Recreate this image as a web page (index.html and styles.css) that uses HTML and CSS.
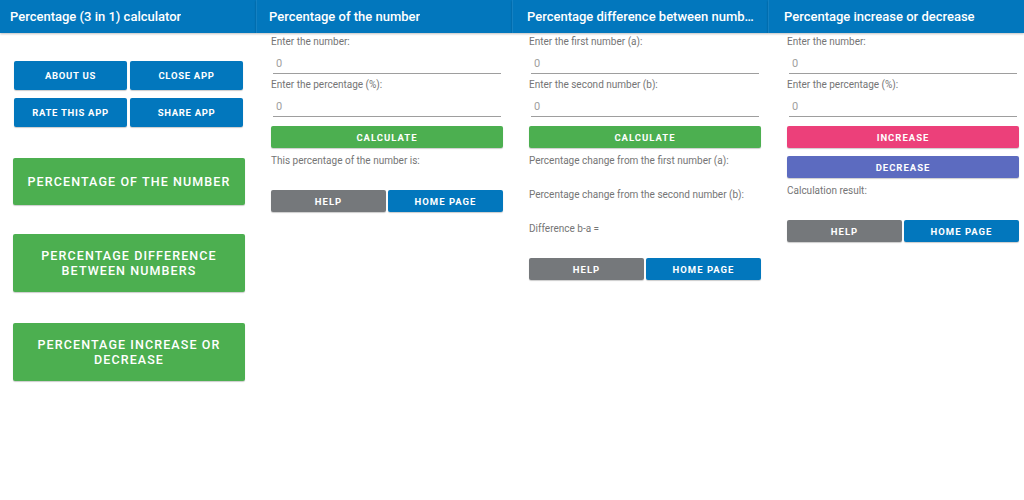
FILE: index.html
```html
<!DOCTYPE html>
<html lang="en">
<head>
    <meta charset="UTF-8">
    <meta name="viewport" content="width=device-width, initial-scale=1.0">
    <title>Percentage (3 in 1) calculator</title>
    <link rel="stylesheet" href="styles.css">
</head>
<body>
    <div class="screens">

        <!-- Home screen -->
        <section class="screen screen-home">
            <header class="appbar"><h1>Percentage (3 in 1) calculator</h1></header>
            <div class="content">
                <div class="menu-grid">
                    <button class="btn btn-blue btn-menu">About us</button>
                    <button class="btn btn-blue btn-menu">Close app</button>
                    <button class="btn btn-blue btn-menu">Rate this app</button>
                    <button class="btn btn-blue btn-menu">Share app</button>
                </div>
                <button class="btn btn-green btn-big btn-big-first">Percentage of the number</button>
                <button class="btn btn-green btn-big btn-big-tall">Percentage difference<br>between numbers</button>
                <button class="btn btn-green btn-big btn-big-tall">Percentage increase or<br>decrease</button>
            </div>
        </section>

        <!-- Percentage of the number -->
        <section class="screen screen-of">
            <header class="appbar"><h1>Percentage of the number</h1></header>
            <div class="content">
                <label class="label">Enter the number:</label>
                <input class="field" type="text" placeholder="0">
                <label class="label">Enter the percentage (%):</label>
                <input class="field" type="text" placeholder="0">
                <button class="btn btn-green btn-action">Calculate</button>
                <p class="result">This percentage of the number is:</p>
                <div class="nav-row">
                    <button class="btn btn-gray btn-nav">Help</button>
                    <button class="btn btn-blue btn-nav">Home page</button>
                </div>
            </div>
        </section>

        <!-- Percentage difference -->
        <section class="screen screen-diff">
            <header class="appbar"><h1>Percentage difference between numbers</h1></header>
            <div class="content">
                <label class="label">Enter the first number (a):</label>
                <input class="field" type="text" placeholder="0">
                <label class="label">Enter the second number (b):</label>
                <input class="field" type="text" placeholder="0">
                <button class="btn btn-green btn-action">Calculate</button>
                <p class="result">Percentage change from the first number (a):</p>
                <p class="result result-spaced">Percentage change from the second number (b):</p>
                <p class="result result-spaced">Difference b-a =</p>
                <div class="nav-row">
                    <button class="btn btn-gray btn-nav">Help</button>
                    <button class="btn btn-blue btn-nav">Home page</button>
                </div>
            </div>
        </section>

        <!-- Percentage increase or decrease -->
        <section class="screen screen-change">
            <header class="appbar"><h1>Percentage increase or decrease</h1></header>
            <div class="content">
                <label class="label">Enter the number:</label>
                <input class="field" type="text" placeholder="0">
                <label class="label">Enter the percentage (%):</label>
                <input class="field" type="text" placeholder="0">
                <button class="btn btn-pink btn-action">Increase</button>
                <button class="btn btn-indigo btn-action btn-action-next">Decrease</button>
                <p class="result">Calculation result:</p>
                <div class="nav-row">
                    <button class="btn btn-gray btn-nav">Help</button>
                    <button class="btn btn-blue btn-nav">Home page</button>
                </div>
            </div>
        </section>

    </div>
</body>
</html>
```

FILE: styles.css
```css
body {
    margin: 0;
    background: #fff;
    font-family: Roboto, "Liberation Sans", Arial, sans-serif;
}
.screens {
    display: grid;
    grid-template-columns: repeat(4, 256px);
    height: 500px;
}
.screen {
    display: flex;
    flex-direction: column;
}
.appbar {
    height: 33px;
    background: #0277bd;
    box-shadow: 0 1px 2px rgba(0, 0, 0, 0.25);
    display: flex;
    align-items: center;
    padding: 0 10px 0 12px;
    border-left: 1px solid rgba(255, 255, 255, 0.08);
    position: relative;
    z-index: 1;
}
.appbar h1 {
    margin: 0;
    color: #fff;
    font-size: 13px;
    font-weight: 500;
    white-space: nowrap;
    overflow: hidden;
    text-overflow: ellipsis;
}
.content {
    display: flex;
    flex-direction: column;
    width: 232px;
    padding-top: 2px;
}

/* per-screen offsets */
.screen-home .appbar { padding-left: 10px; border-left: none; }
.screen-home .content { margin-left: 13px; padding-top: 0; }
.screen-of .content { margin-left: 15px; }
.screen-diff .appbar { padding-left: 14px; }
.screen-diff .content { margin-left: 17px; }
.screen-change .appbar { padding-left: 15px; }
.screen-change .content { margin-left: 19px; }

/* buttons */
.btn {
    border: none;
    border-radius: 2px;
    color: #fff;
    font-family: inherit;
    font-weight: 700;
    text-transform: uppercase;
    cursor: pointer;
    padding: 0;
    box-shadow: 0 1px 1px rgba(0, 0, 0, 0.2);
}
.btn-blue { background: #0277bd; }
.btn-green { background: #4caf50; }
.btn-gray { background: #75787b; }
.btn-pink { background: #ec407a; }
.btn-indigo { background: #5c6bc0; }

.menu-grid {
    display: grid;
    grid-template-columns: 113px 113px;
    column-gap: 3px;
    row-gap: 8px;
    margin: 28px 0 0 1px;
}
.btn-menu {
    height: 29px;
    font-size: 9.5px;
    letter-spacing: 0.7px;
}
.btn-big {
    width: 232px;
    font-size: 12.5px;
    font-weight: 500;
    letter-spacing: 1.1px;
    line-height: 15px;
    margin-top: 31px;
}
.btn-big-first { height: 47px; }
.btn-big-tall { height: 58px; margin-top: 29px; }
.btn-big-tall + .btn-big-tall { margin-top: 31px; }

/* form fields */
.label {
    font-size: 10px;
    line-height: 14px;
    color: #757575;
}
.label + .field + .label { margin-top: 4px; }
.field {
    margin: 0 2px;
    height: 25px;
    padding: 6px 3px 2px;
    box-sizing: border-box;
    border: none;
    border-bottom: 1px solid #9e9e9e;
    font-family: inherit;
    font-size: 11px;
    color: #333;
    outline: none;
}
.field::placeholder { color: #a0a0a0; }

.btn-action {
    height: 22px;
    margin-top: 9px;
    font-size: 9.5px;
    letter-spacing: 1px;
}
.btn-action-next { margin-top: 8px; }

.result {
    margin: 6px 0 0;
    font-size: 10px;
    line-height: 14px;
    color: #757575;
}
.result-spaced { margin-top: 20px; }

.nav-row {
    display: flex;
    gap: 2px;
    margin-top: 22px;
}
.btn-nav {
    flex: 1;
    height: 22px;
    font-size: 9.5px;
    letter-spacing: 1px;
}
```
